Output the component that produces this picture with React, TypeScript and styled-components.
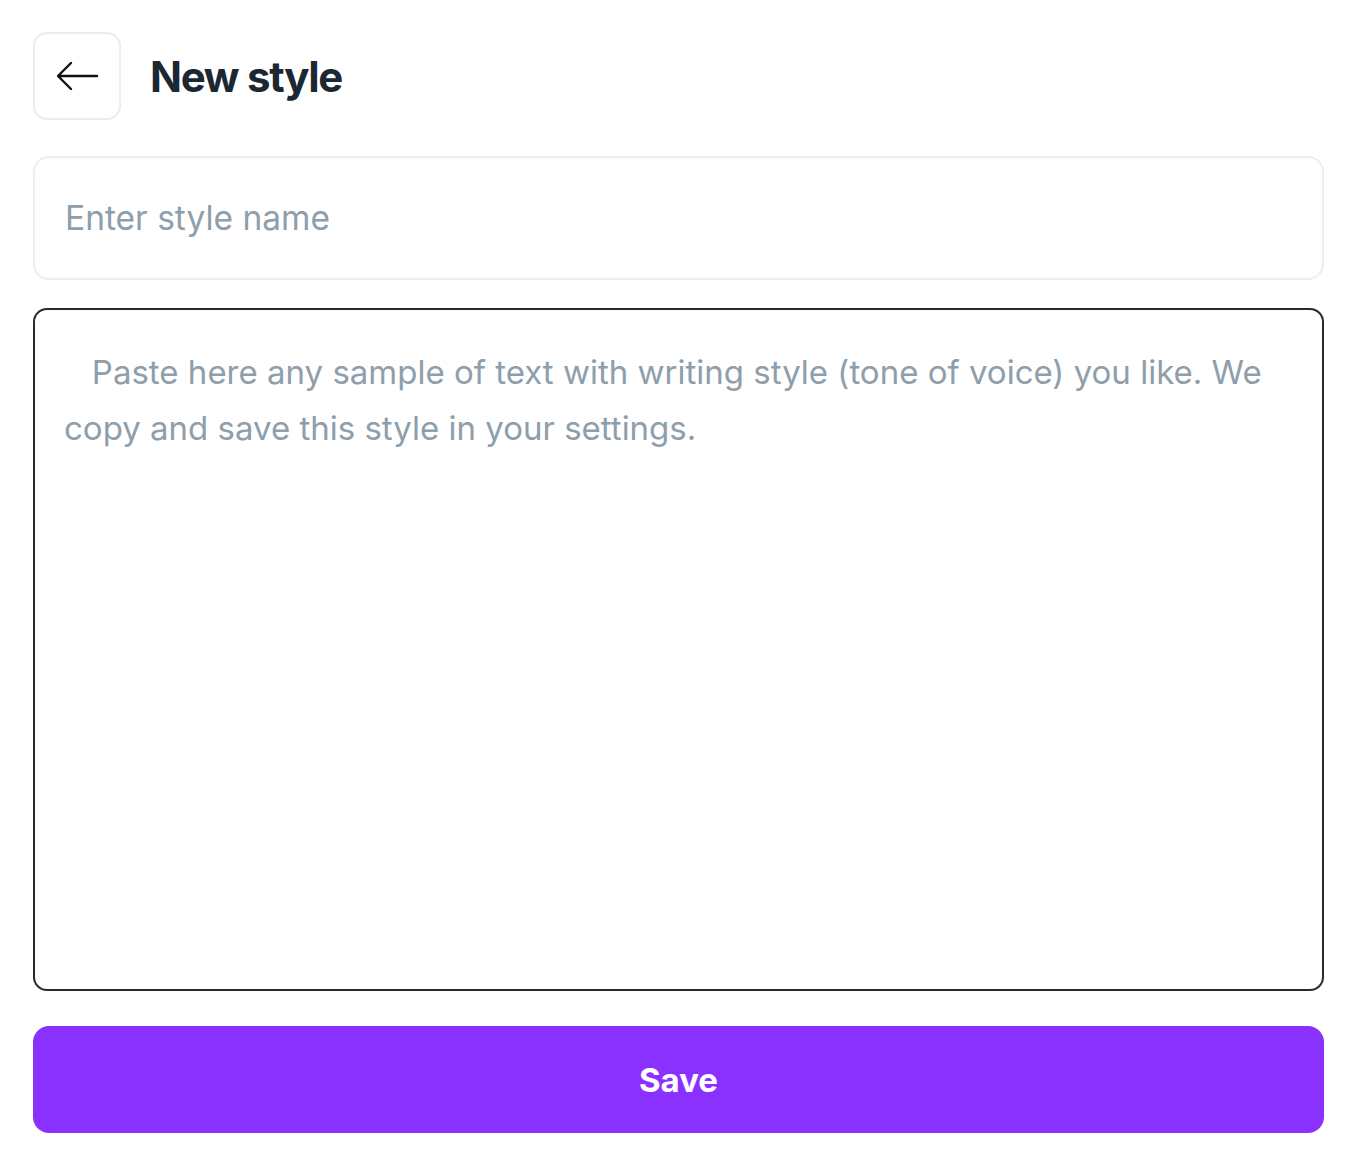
import * as React from 'react';
import styled, {createGlobalStyle} from 'styled-components';

const GlobalStyle = createGlobalStyle`
  body {
    margin: 0;
    background: #fff;
    font-family: Inter, "Noto Sans", sans-serif;
  }
`;

const Page = styled.div`
  box-sizing: border-box;
  width: 1324px;
  padding: 32px 0 0 33px;
  display: flex;
  flex-direction: column;
`;

const Header = styled.div`
  display: flex;
  align-items: center;
  gap: 29px;
  margin-bottom: 36px;
`;

const BackButton = styled.button`
  box-sizing: border-box;
  width: 88px;
  height: 88px;
  border: 2px solid #ececec;
  border-radius: 14px;
  background: #fff;
  display: flex;
  align-items: center;
  justify-content: center;
  padding: 0;
  cursor: pointer;
`;

const Title = styled.h1`
  margin: 0;
  font-size: 42px;
  font-weight: 700;
  letter-spacing: -1.3px;
  color: #1b2733;
`;

const NameInput = styled.input`
  box-sizing: border-box;
  width: 100%;
  height: 124px;
  border: 2px solid #eceef0;
  border-radius: 16px;
  padding: 0 30px;
  font-family: inherit;
  font-size: 33.5px;
  color: #1b2733;
  outline: none;
  margin-bottom: 28px;

  &::placeholder {
    color: #8e9eab;
  }
`;

const SampleArea = styled.textarea`
  box-sizing: border-box;
  width: 100%;
  height: 683px;
  border: 2px solid #252b33;
  border-radius: 14px;
  padding: 34px 29px;
  font-family: inherit;
  font-size: 33px;
  line-height: 56px;
  color: #1b2733;
  resize: none;
  outline: none;
  margin-bottom: 35px;

  &::placeholder {
    color: #8e9eab;
  }
`;

const SaveButton = styled.button`
  width: 100%;
  height: 107px;
  border: none;
  border-radius: 16px;
  background: #8b31ff;
  color: #fff;
  font-family: inherit;
  font-size: 33px;
  font-weight: 700;
  cursor: pointer;
`;

export default function App() {
  const [name, setName] = React.useState('');
  const [sample, setSample] = React.useState('');

  return (
    <Page>
      <GlobalStyle />
      <Header>
        <BackButton aria-label="Back">
          <svg width="44" height="32" viewBox="0 0 44 32" fill="none">
            <path
              d="M42 16H4M16 3L3 16l13 13"
              stroke="#111"
              strokeWidth="2.4"
              strokeLinecap="round"
              strokeLinejoin="round"
            />
          </svg>
        </BackButton>
        <Title>New style</Title>
      </Header>
      <NameInput
        value={name}
        onChange={e => setName(e.currentTarget.value)}
        placeholder="Enter style name"
      />
      <SampleArea
        value={sample}
        onChange={e => setSample(e.currentTarget.value)}
        placeholder="   Paste here any sample of text with writing style (tone of voice) you like. We copy and save this style in your settings."
      />
      <SaveButton>Save</SaveButton>
    </Page>
  );
}
